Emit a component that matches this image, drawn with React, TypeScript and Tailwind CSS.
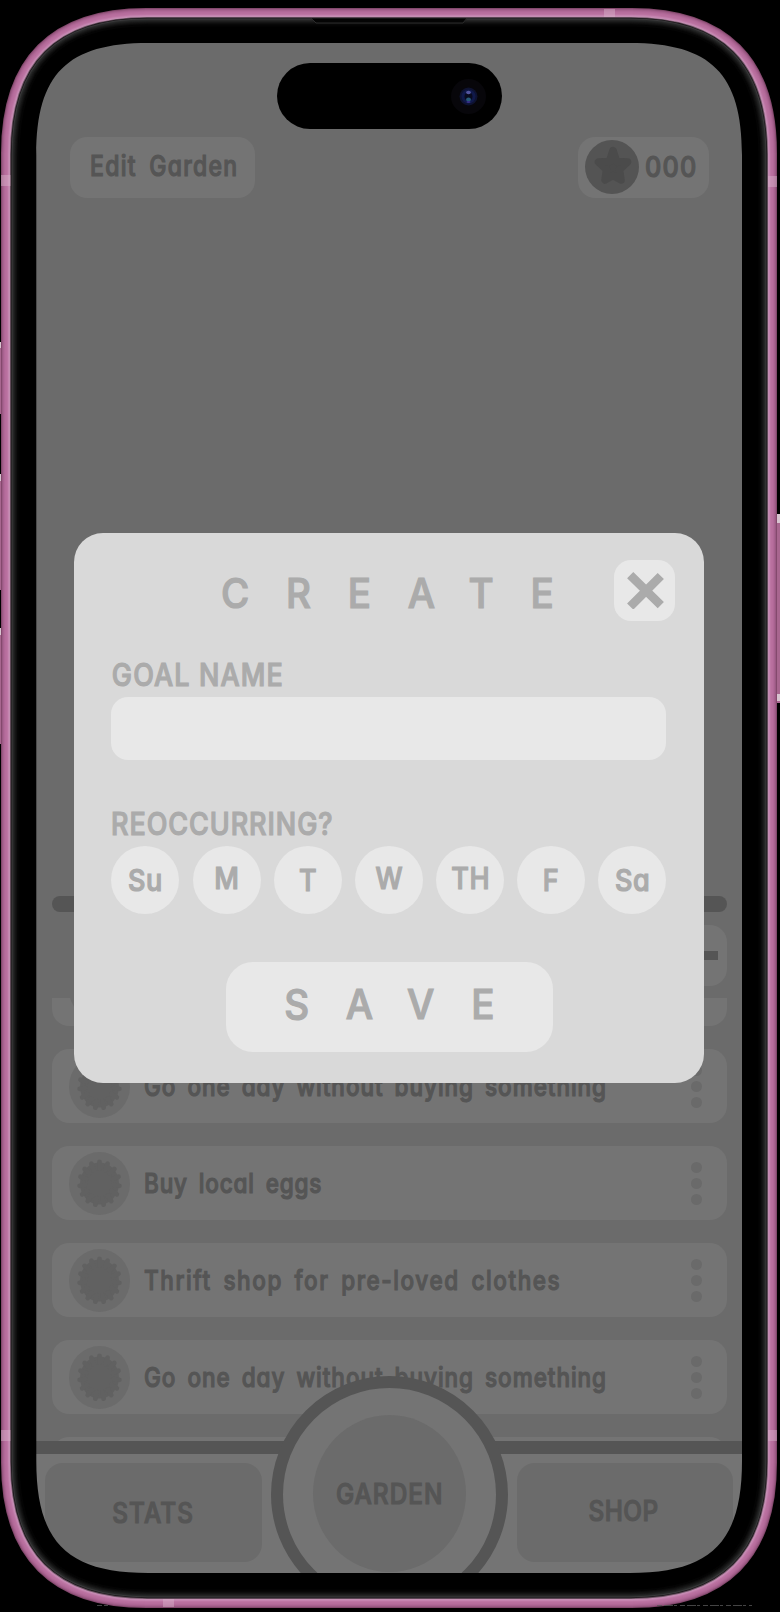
import React from "react";

const goals = [
  { text: "", spacing: "" },
  { text: "Go one day without buying something", spacing: "tracking-[1.150px]" },
  { text: "Buy local eggs", spacing: "tracking-[1px]" },
  { text: "Thrift shop for pre-loved clothes", spacing: "tracking-[1.900px]" },
  { text: "Go one day without buying something", spacing: "tracking-[1.150px]" },
  { text: "", spacing: "" },
];

const days = [
  { label: "Su", shift: "pb-[1px]" },
  { label: "M", shift: "pb-[5px]" },
  { label: "T", shift: "pb-[1px]" },
  { label: "W", shift: "pb-[5px]" },
  { label: "TH", shift: "pb-[5px]" },
  { label: "F", shift: "pb-[1px]" },
  { label: "Sa", shift: "pb-[1px]" },
];

function devicePath(i: number) {
  const l = 1 + i;
  const t = 8 + i;
  const r = 777 - i;
  const b = 1608 - i;
  const e = 145 - 0.85 * i;
  const h = 50 - 0.53 * i;
  return `M${l} ${t + e}C${l} ${t + h} ${l + h} ${t} ${l + e} ${t}H${r - e}C${r - h} ${t} ${r} ${t + h} ${r} ${t + e}V${b - e}C${r} ${b - h} ${r - h} ${b} ${r - e} ${b}H${l + e}C${l + h} ${b} ${l} ${b - h} ${l} ${b - e}Z`;
}

const rim = [
  [1, "#84496d"],
  [2, "#9b5a84"],
  [3, "#a8628f"],
  [4, "#b16998"],
  [5, "#b76e9d"],
  [6, "#b9709f"],
  [7, "#bd76a4"],
  [8, "#c584b0"],
  [9, "#c48fb3"],
  [10, "#6f5566"],
  [10.8, "#1d191c"],
  [11.6, "#39393a"],
  [12.6, "#282929"],
  [13.6, "#202121"],
  [14.6, "#181818"],
  [15.6, "#111111"],
  [16.6, "#0a0a0a"],
  [17.6, "#040404"],
] as const;

function DeviceFrame() {
  return (
    <svg className="pointer-events-none absolute inset-0" width="780" height="1612" viewBox="0 0 780 1612">
      <path
        fillRule="evenodd"
        fill="#000"
        d="M0 0H780V1612H0Z M36.3 155C36.3 74 67.3 43 148.3 43H630C711 43 742 74 742 155V1461C742 1542 711 1573 630 1573H148.3C67.3 1573 36.3 1542 36.3 1461Z"
      />
      <g fill="#a8668f">
        <rect x="0" y="342" width="2" height="72" />
        <rect x="0" y="474" width="2" height="116" />
        <rect x="0" y="628" width="2" height="116" />
        <rect x="777" y="514" width="3" height="189" />
      </g>
      <g fill="#d8c4d0">
        <rect x="0" y="342" width="1" height="6" />
        <rect x="0" y="474" width="1" height="7" />
        <rect x="0" y="628" width="1" height="7" />
        <rect x="777" y="514" width="3" height="9" />
        <rect x="777" y="694" width="3" height="7" />
      </g>
      {rim.map(([i, c]) => (
        <path key={i} d={devicePath(i)} fill="none" stroke={c} strokeWidth="2" />
      ))}
      <g fill="#d9b6cc" fillOpacity=".45">
        <rect x="1" y="175" width="9.5" height="11" />
        <rect x="768" y="176" width="9" height="11" />
        <rect x="604" y="9" width="11" height="8" />
        <rect x="1" y="1430" width="9.5" height="11" />
        <rect x="768" y="1430" width="9" height="11" />
        <rect x="163" y="1599" width="11" height="8" />
      </g>
      <path d="M311 18.500H467L463 23H316Z" fill="#050505" />
      <path d="M311 18L316 23H463L467 18" fill="none" stroke="#2c2c2c" />
      <path d="M97 1605.500H108M657 1605.500H752" stroke="#555" strokeWidth=".8" strokeDasharray="5 2 9 1 3 3" />
    </svg>
  );
}

function Star() {
  return (
    <svg width="54" height="54" viewBox="0 0 54 54" className="shrink-0 rounded-full bg-[#545454]">
      <path
        d="M28 10.500L31.500 21.500L42.500 22L34.500 29.500L36 40L28 35.500L20 40L21.500 29.500L13.500 22L24.500 21.500Z"
        fill="#4b4b4b"
        stroke="#4b4b4b"
        strokeWidth="7.500"
        strokeLinejoin="round"
      />
    </svg>
  );
}

const sealPoints = Array.from({ length: 15 }, (_, n) => {
  const a = (n * 2 * Math.PI) / 15;
  return [Math.sin(a), -Math.cos(a)];
});

function Seal() {
  return (
    <svg width="61" height="63" viewBox="0 0 61 63" className="mt-px ml-[0.500px] shrink-0">
      <ellipse cx="30.500" cy="31.500" rx="30.500" ry="31.500" fill="#6b6b6b" />
      <g fill="#616161" stroke="#616161">
        <ellipse cx="30.500" cy="31.500" rx="19.500" ry="21" stroke="none" />
        {sealPoints.map(([x, y], n) => (
          <path
            key={n}
            d={`M${30.5 + x * 14} ${31.5 + y * 15}L${30.5 + x * 20} ${31.5 + y * 21.7}`}
            strokeWidth="4.700"
            strokeLinecap="round"
          />
        ))}
      </g>
    </svg>
  );
}

function GoalRow({ text, spacing }: { text: string; spacing: string }) {
  return (
    <div className="flex h-[73.500px] shrink-0 items-center rounded-[17px] bg-[#747474] pr-[25.500px] pl-4">
      <Seal />
      {text && (
        <span className={`mt-[2px] ml-[14.500px] w-[480px] origin-left scale-x-[0.82] text-[27.500px] leading-none whitespace-nowrap [word-spacing:5px] ${spacing}`}>
          {text}
        </span>
      )}
      <div className="mt-px ml-auto flex flex-col gap-[5.200px]">
        <i className="size-[11px] rounded-full bg-[#6a6a6a]" />
        <i className="size-[11px] rounded-full bg-[#6a6a6a]" />
        <i className="size-[11px] rounded-full bg-[#6a6a6a]" />
      </div>
    </div>
  );
}

function CreateDialog() {
  return (
    <div className="absolute top-[533px] left-[73.700px] flex h-[549.500px] w-[630.300px] flex-col rounded-[29px] bg-[#d9d9d9] px-[37.700px] text-[#ababab]">
      <div className="relative flex h-[115px] items-center">
        <h1 className="ml-[110px] origin-left scale-x-[0.93] pt-[6px] text-[41.500px] leading-none tracking-[39.500px]">CREATE</h1>
        <button className="absolute top-[27px] right-[-8.500px] flex size-[61px] items-center justify-center rounded-[17px] bg-[#e8e8e8]">
          <svg width="37" height="37" viewBox="0 0 37 37" stroke="#ababab" strokeWidth="8.800" className="ml-[2px]">
            <path d="M3.200 3.200L33.800 33.200M3.200 34.500L33.800 4" />
          </svg>
        </button>
      </div>
      <label className="mt-[9px] flex flex-col text-[31px] leading-[36px]">
        <span className="origin-left scale-x-[0.87] pl-px tracking-[1.300px] whitespace-nowrap">GOAL NAME</span>
        <input className="mt-[4px] h-[62.500px] w-full rounded-[17px] bg-[#e8e8e8]" />
      </label>
      <div className="mt-[46px] text-[31px] leading-[36px]">
        <span className="block origin-left scale-x-[0.87] tracking-[1.100px] whitespace-nowrap">REOCCURRING?</span>
      </div>
      <div className="mt-[4.500px] flex justify-between">
        {days.map((d) => (
          <button key={d.label} className={`flex size-[68px] items-center justify-center rounded-full bg-[#e8e8e8] text-[30px] leading-none ${d.shift}`}>
            <span className="scale-x-[0.9] pl-px tracking-[0.800px]">{d.label}</span>
          </button>
        ))}
      </div>
      <button className="mt-[48px] ml-[114.600px] flex h-[90px] w-[327px] items-center justify-center rounded-[27px] bg-[#e8e8e8] pb-[5px] pl-[36px] text-[41.500px] leading-none">
        <span className="scale-x-[0.93] tracking-[39.500px]">SAVE</span>
      </button>
    </div>
  );
}

export default function App() {
  return (
    <div className="relative h-[1612px] w-[780px] overflow-hidden bg-black pt-[43px] pl-[36px] font-['Inter','Liberation_Sans',sans-serif] font-medium [font-feature-settings:'cv11'] [-webkit-text-stroke:1.2px_currentColor] [stroke-linejoin:round]">
      <div className="flex h-[1530px] w-[706px] flex-col overflow-hidden bg-[#6b6b6b] text-[#555]">
        <header className="flex justify-between pt-[93.500px] pr-[33px] pl-[34px]">
          <button className="flex h-[61px] w-[185px] items-center justify-center rounded-[17px] bg-[#747474] pb-[2px] text-[28px] leading-none whitespace-nowrap">
            <span className="scale-x-[0.82] pl-[3px] tracking-[1.600px] [word-spacing:6px]">Edit Garden</span>
          </button>
          <div className="flex h-[61px] w-[131px] items-center rounded-[17px] bg-[#747474] pl-[7px] text-[28px] leading-none">
            <Star />
            <span className="-mt-px ml-[5.500px] origin-left scale-x-[0.9] tracking-[1.400px]">000</span>
          </div>
        </header>
        <div className="mr-[15px] ml-4 mt-[698.500px] h-4 shrink-0 rounded-full bg-[#555]" />
        <div className="mt-[12.500px] mr-[15px] flex justify-end">
          <button className="flex size-[61px] items-center justify-center rounded-[17px] bg-[#747474]">
            <i className="h-[9px] w-[43px] bg-[#555]" />
          </button>
        </div>
        <main className="mt-[12.500px] flex h-[443px] shrink-0 flex-col gap-[23.400px] overflow-hidden pr-[15px] pl-4">
          <div className="-mt-[45.500px] h-[73.500px] shrink-0">
            <GoalRow text={goals[0].text} spacing={goals[0].spacing} />
          </div>
          {goals.slice(1).map((g, n) => (
            <GoalRow key={n} text={g.text} spacing={g.spacing} />
          ))}
        </main>
        <nav className="relative flex h-[132px] shrink-0 justify-between border-t-[13px] border-[#555] bg-[#747474] px-[9px] pt-[9px] text-[28px] leading-none">
          <button className="flex h-[99px] w-[217px] items-center justify-center rounded-[18px] bg-[#6b6b6b]">
            <span className="scale-x-[0.87] tracking-[1.300px]">STATS</span>
          </button>
          <button className="flex h-[99px] w-[216px] items-center justify-center rounded-[18px] bg-[#6b6b6b] pb-[3px]">
            <span className="scale-x-[0.87] pr-[3px] tracking-[0.600px]">SHOP</span>
          </button>
          <button className="absolute -top-[78.500px] left-[235px] flex size-[237px] items-center justify-center rounded-full border-[12.500px] border-[#555] bg-[#747474]">
            <span className="-mt-[1px] -ml-px flex h-[157px] w-[153px] items-center justify-center rounded-[50%] bg-[#6b6b6b]">
              <span className="scale-x-[0.87] pl-[2px] tracking-[1.200px]">GARDEN</span>
            </span>
          </button>
        </nav>
      </div>
      <div className="absolute top-[63px] left-[276.500px] flex h-[66px] w-[225px] items-center justify-end rounded-full bg-black pr-[16px]">
        <svg width="35" height="35" viewBox="0 0 35 35">
          <circle cx="17.500" cy="17.500" r="17.500" fill="#07060a" />
          <circle cx="17.500" cy="17.500" r="9" fill="#0e1230" />
          <circle cx="17.500" cy="17.500" r="7" fill="#10194a" />
          <circle cx="17.500" cy="17.500" r="4" fill="#090b1e" />
          <ellipse cx="17.500" cy="13.500" rx="2.400" ry="1.700" fill="#5456a0" />
          <ellipse cx="17.500" cy="20.500" rx="2.400" ry="2" fill="#265a78" />
          <ellipse cx="17.500" cy="23" rx="2" ry="1" fill="#38308a" />
        </svg>
      </div>
      <CreateDialog />
      <DeviceFrame />
    </div>
  );
}
